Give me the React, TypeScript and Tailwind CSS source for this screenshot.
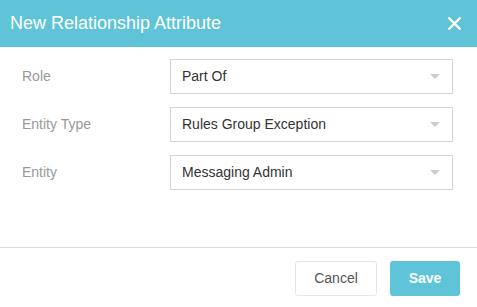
import React from "react";

const rows = [
  { label: "Role", value: "Part Of" },
  { label: "Entity Type", value: "Rules Group Exception" },
  { label: "Entity", value: "Messaging Admin" },
];

function SelectBox({ value }: { value: string }) {
  return (
    <div className="flex h-[35px] w-[283px] items-center justify-between border border-[#d4d4d4] bg-white pl-[11px] pr-[12px]">
      <span className="text-[14px] text-[#333]">{value}</span>
      <svg width="10" height="5" viewBox="0 0 10 5">
        <path d="M0 0 L10 0 L5 5 Z" fill="#cccccc" />
      </svg>
    </div>
  );
}

export default function App() {
  return (
    <div className="flex h-[307px] w-[477px] flex-col bg-white font-['Liberation_Sans',Arial,sans-serif]">
      {/* Header */}
      <div className="flex h-[47px] items-center justify-between bg-[#5fc4d7] pl-[10px] pr-[15px]">
        <h1 className="text-[18px] text-white">New Relationship Attribute</h1>
        <svg width="15" height="15" viewBox="0 0 15 15">
          <path d="M1.5 1.5 L13.5 13.5 M13.5 1.5 L1.5 13.5" stroke="white" strokeWidth="2.4" />
        </svg>
      </div>

      {/* Body */}
      <div className="flex flex-1 flex-col gap-[13px] pl-[22px] pt-[12px]">
        {rows.map((r) => (
          <div key={r.label} className="flex items-center">
            <label className="w-[148px] text-[14px] text-[#999]">{r.label}</label>
            <SelectBox value={r.value} />
          </div>
        ))}
      </div>

      {/* Footer */}
      <div className="flex h-[60px] items-start justify-end gap-[13px] border-t border-[#dcdcdc] pr-[17px] pt-[13px]">
        <button className="h-[35px] w-[82px] rounded-[3px] border border-[#e6e6e6] bg-white text-[14px] text-[#555]">
          Cancel
        </button>
        <button className="h-[35px] w-[70px] rounded-[3px] bg-[#5fc4d7] text-[14px] font-bold text-white">
          Save
        </button>
      </div>
    </div>
  );
}
